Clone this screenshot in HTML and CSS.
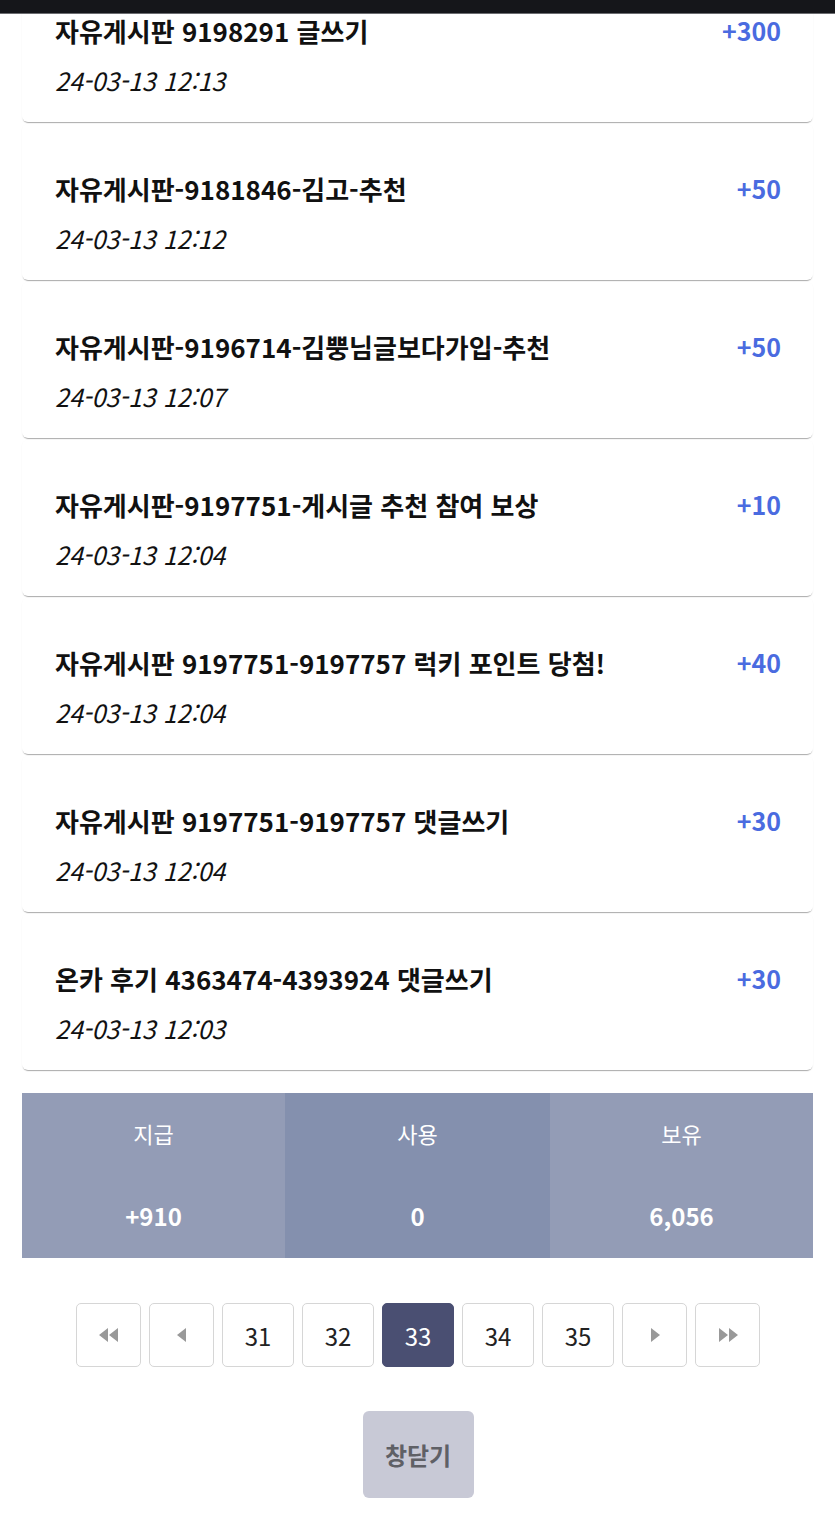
FILE: index.html
```html
<!DOCTYPE html>
<html lang="ko">
<head>
    <meta charset="UTF-8">
    <meta name="viewport" content="width=device-width, initial-scale=1.0">
    <title>포인트 내역</title>
    <link rel="stylesheet" href="styles.css">
</head>
<body>
    <div class="status-bar"></div>

    <div class="point-list">
        <div class="point-item">
            <div class="point-row">
                <span class="point-title">자유게시판 9198291 글쓰기</span>
                <span class="point-amount">+300</span>
            </div>
            <div class="point-date">24-03-13 12:13</div>
        </div>
        <div class="point-item">
            <div class="point-row">
                <span class="point-title">자유게시판-9181846-김고-추천</span>
                <span class="point-amount">+50</span>
            </div>
            <div class="point-date">24-03-13 12:12</div>
        </div>
        <div class="point-item">
            <div class="point-row">
                <span class="point-title">자유게시판-9196714-김뿡님글보다가입-추천</span>
                <span class="point-amount">+50</span>
            </div>
            <div class="point-date">24-03-13 12:07</div>
        </div>
        <div class="point-item">
            <div class="point-row">
                <span class="point-title">자유게시판-9197751-게시글 추천 참여 보상</span>
                <span class="point-amount">+10</span>
            </div>
            <div class="point-date">24-03-13 12:04</div>
        </div>
        <div class="point-item">
            <div class="point-row">
                <span class="point-title">자유게시판 9197751-9197757 럭키 포인트 당첨!</span>
                <span class="point-amount">+40</span>
            </div>
            <div class="point-date">24-03-13 12:04</div>
        </div>
        <div class="point-item">
            <div class="point-row">
                <span class="point-title">자유게시판 9197751-9197757 댓글쓰기</span>
                <span class="point-amount">+30</span>
            </div>
            <div class="point-date">24-03-13 12:04</div>
        </div>
        <div class="point-item">
            <div class="point-row">
                <span class="point-title">온카 후기 4363474-4393924 댓글쓰기</span>
                <span class="point-amount">+30</span>
            </div>
            <div class="point-date">24-03-13 12:03</div>
        </div>
    </div>

    <div class="summary">
        <div class="summary-col">
            <div class="summary-head">지급</div>
            <div class="summary-value">+910</div>
        </div>
        <div class="summary-col used">
            <div class="summary-head">사용</div>
            <div class="summary-value">0</div>
        </div>
        <div class="summary-col">
            <div class="summary-head">보유</div>
            <div class="summary-value">6,056</div>
        </div>
    </div>

    <div class="pagination">
        <a class="page-btn arrow" href="#">
            <svg width="20" height="14" viewBox="0 0 20 14"><path d="M9 0L0 7l9 7z M19 0L10 7l9 7z" fill="#999"/></svg>
        </a>
        <a class="page-btn arrow" href="#">
            <svg width="10" height="14" viewBox="0 0 10 14"><path d="M9 0L0 7l9 7z" fill="#999"/></svg>
        </a>
        <a class="page-btn" href="#">31</a>
        <a class="page-btn" href="#">32</a>
        <a class="page-btn active" href="#">33</a>
        <a class="page-btn" href="#">34</a>
        <a class="page-btn" href="#">35</a>
        <a class="page-btn arrow" href="#">
            <svg width="10" height="14" viewBox="0 0 10 14"><path d="M1 0l9 7-9 7z" fill="#999"/></svg>
        </a>
        <a class="page-btn arrow" href="#">
            <svg width="20" height="14" viewBox="0 0 20 14"><path d="M1 0l9 7-9 7z M11 0l9 7-9 7z" fill="#999"/></svg>
        </a>
    </div>

    <div class="close-wrap">
        <button class="close-btn">창닫기</button>
    </div>
</body>
</html>
```

FILE: styles.css
```css
body {
    margin: 0;
    font-family: "Noto Sans CJK KR", "Noto Sans", sans-serif;
    background: #fff;
    color: #111;
}

.status-bar {
    position: fixed;
    top: 0;
    left: 0;
    right: 0;
    height: 13px;
    background: #15161a;
    border-bottom: 1px solid #6b6c70;
    z-index: 10;
}

.point-list {
    display: flex;
    flex-direction: column;
    gap: 2px;
    margin: -34px 22px 0;
}

.point-item {
    height: 156px;
    box-sizing: border-box;
    padding: 46px 32px 0 33px;
    border-radius: 6px;
    box-shadow: 0 2px 1px -1px rgba(0, 0, 0, 0.3), 0 1px 2px rgba(0, 0, 0, 0.05);
    background: #fff;
}

.point-row {
    display: flex;
    justify-content: space-between;
    align-items: center;
    height: 36px;
}

.point-title {
    font-size: 26px;
    font-weight: 700;
    color: #111;
}

.point-amount {
    font-size: 25px;
    font-weight: 700;
    color: #4a6be0;
}

.point-date {
    margin-top: 14px;
    height: 36px;
    line-height: 36px;
    font-size: 25px;
    font-weight: 400;
    font-style: italic;
    color: #111;
}

.summary {
    display: grid;
    grid-template-columns: 263px 265px 263px;
    margin: 23px 22px 0;
    background: #939cb6;
    color: #fff;
}

.summary-col {
    text-align: center;
}

.summary-col.used {
    background: #8490ae;
}

.summary-head {
    height: 82px;
    line-height: 80px;
    font-size: 22px;
    font-weight: 400;
}

.summary-value {
    height: 83px;
    line-height: 82px;
    font-size: 24px;
    font-weight: 700;
}

.pagination {
    display: flex;
    justify-content: center;
    gap: 8px;
    margin-top: 45px;
    padding-left: 1px;
}

.page-btn {
    display: flex;
    align-items: center;
    justify-content: center;
    width: 72px;
    height: 64px;
    box-sizing: border-box;
    border: 1px solid #d6d6d6;
    border-radius: 5px;
    background: #fff;
    color: #222;
    font-size: 24px;
    text-decoration: none;
}

.page-btn.arrow {
    width: 65px;
}

.page-btn.active {
    background: #4a4f72;
    border-color: #4a4f72;
    color: #fff;
}

.close-wrap {
    display: flex;
    justify-content: center;
    margin-top: 44px;
    padding-left: 1px;
}

.close-btn {
    width: 111px;
    height: 87px;
    border: none;
    border-radius: 6px;
    background: #c8c9d6;
    color: #5f6066;
    font-family: inherit;
    font-size: 24px;
    font-weight: 700;
}
```
